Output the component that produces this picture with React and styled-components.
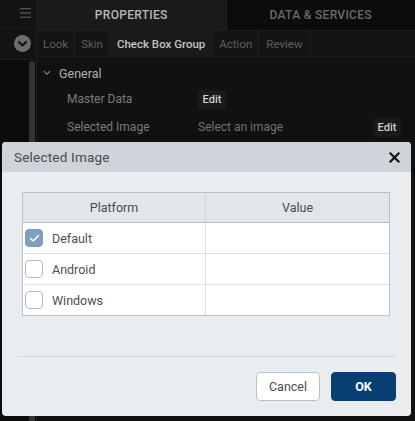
import React from "react";
import styled, { createGlobalStyle } from "styled-components";

const Global = createGlobalStyle`
  html, body { margin: 0; padding: 0; background: #0d0d0d; }
  body { font-family: Roboto, "Liberation Sans", sans-serif; }
  #root { width: 415px; height: 421px; overflow: hidden; }
`;

const Page = styled.div`
  position: relative;
  width: 415px;
  height: 421px;
  display: flex;
  background: #111111;
  overflow: hidden;
`;

const Sidebar = styled.div`
  width: 36px;
  flex: none;
  display: flex;
  flex-direction: column;
  border-right: 1px solid #1e1e1e;
  background: #0b0b0b;
`;

const SideCell = styled.div`
  height: ${(p) => p.h}px;
  display: flex;
  align-items: center;
  justify-content: flex-end;
  padding-right: ${(p) => p.pr}px;
  background: #131313;
  border-bottom: 1px solid #1e1e1e;
  box-sizing: border-box;
`;

const SideRest = styled.div`
  flex: 1;
  display: flex;
  justify-content: flex-end;
  padding-top: 1px;
`;

const ScrollBar = styled.div`
  width: 6px;
  height: 360px;
  margin-right: 1px;
  background: #333;
  border-radius: 3px 3px 0 0;
`;

const Main = styled.div`
  flex: 1;
  display: flex;
  flex-direction: column;
  min-width: 0;
`;

const TopTabs = styled.div`
  display: flex;
  height: 30px;
  border-bottom: 1px solid #1e1e1e;
`;

const TopTab = styled.div`
  flex: 1;
  display: flex;
  align-items: center;
  justify-content: center;
  font-size: 12px;
  font-weight: 500;
  letter-spacing: 0.3px;
  color: ${(p) => (p.active ? "#b8b8b8" : "#6a6a6a")};
  background: ${(p) => (p.active ? "#1a1a1a" : "#0c0c0c")};
  border-right: ${(p) => (p.active ? "1px solid #222" : "none")};
`;

const SubTabs = styled.div`
  display: flex;
  height: 25px;
  background: #141414;
  border-bottom: 1px solid #1a1a1a;
`;

const SubTab = styled.div`
  display: flex;
  align-items: center;
  padding: 0 ${(p) => p.px || 6}px;
  font-size: 11.5px;
  color: ${(p) => (p.active ? "#c4c4c4" : "#5e5e5e")};
  font-weight: ${(p) => (p.active ? 500 : 400)};
  background: ${(p) => (p.active ? "#1a1a1a" : "transparent")};
  border-right: 1px solid #1f1f1f;
`;

const Content = styled.div`
  flex: 1;
  padding: 7px 0 0 6px;
  display: flex;
  flex-direction: column;
`;

const SectionHead = styled.div`
  display: flex;
  align-items: center;
  gap: 8px;
  height: 18px;
  margin-bottom: 3px;
  font-size: 12.5px;
  color: #b0b0b0;
`;

const PropRow = styled.div`
  display: flex;
  align-items: center;
  height: 28px;
  padding-left: 24px;
  padding-right: 14px;
  font-size: 12px;
  color: #7a7a7a;
`;

const PropLabel = styled.div`
  width: 131px;
  flex: none;
`;

const PropValue = styled.div`
  flex: 1;
  color: #707070;
`;

const DarkEdit = styled.div`
  width: 28px;
  height: 19px;
  display: flex;
  align-items: center;
  justify-content: center;
  background: #1a1a1a;
  border-radius: 3px;
  color: #d0d0d0;
  font-size: 11px;
  font-weight: 500;
`;

const Modal = styled.div`
  position: absolute;
  left: 2px;
  top: 142px;
  width: 409px;
  height: 274px;
  background: #e9edf0;
  border-radius: 4px;
  display: flex;
  flex-direction: column;
  overflow: hidden;
`;

const ModalHeader = styled.div`
  height: 30px;
  flex: none;
  background: #cfd4da;
  display: flex;
  align-items: center;
  justify-content: space-between;
  padding: 0 11px 0 12px;
  font-size: 13.5px;
  color: #4a4a4a;
  letter-spacing: 0.2px;
`;

const ModalBody = styled.div`
  padding: 20px 21px 0 20px;
`;

const Table = styled.div`
  border: 1px solid #b9c0c7;
  background: #ffffff;
`;

const HeadRow = styled.div`
  display: grid;
  grid-template-columns: 183px 1fr;
  height: 29px;
  background: #e2e6ea;
  border-bottom: 1px solid #b9c0c7;
`;

const HeadCell = styled.div`
  display: flex;
  align-items: center;
  justify-content: center;
  font-size: 12.5px;
  color: #4a4a4a;
  border-right: ${(p) => (p.first ? "1px solid #d0d5da" : "none")};
`;

const Row = styled.div`
  display: grid;
  grid-template-columns: 183px 1fr;
  height: 30px;
  border-bottom: ${(p) => (p.last ? "none" : "1px solid #dadee2")};
`;

const Cell = styled.div`
  display: flex;
  align-items: center;
  gap: 9px;
  padding-left: 2px;
  font-size: 12.5px;
  color: #4f4f4f;
  border-right: ${(p) => (p.first ? "1px solid #dadee2" : "none")};
`;

const Box = styled.div`
  width: 18px;
  height: 18px;
  box-sizing: border-box;
  border-radius: 4px;
  border: 1px solid ${(p) => (p.checked ? "#7f9fbf" : "#b4bcc4")};
  background: ${(p) => (p.checked ? "#7f9fbf" : "#ffffff")};
  display: flex;
  align-items: center;
  justify-content: center;
`;

const Separator = styled.div`
  margin: 40px 15px 0 15px;
  height: 1px;
  background: #d3d8dc;
`;

const Footer = styled.div`
  display: flex;
  justify-content: flex-end;
  gap: 11px;
  padding: 15px 15px 0 0;
`;

const Button = styled.button`
  height: 29px;
  width: ${(p) => p.w}px;
  border-radius: 4px;
  font-family: Roboto, "Liberation Sans", sans-serif;
  font-size: 12.5px;
  cursor: pointer;
  border: 1px solid ${(p) => (p.primary ? "#073f75" : "#b9c0c7")};
  background: ${(p) => (p.primary ? "#073f75" : "#ffffff")};
  color: ${(p) => (p.primary ? "#ffffff" : "#4a4a4a")};
  font-weight: ${(p) => (p.primary ? 700 : 400)};
`;

const rows = [
  { name: "Default", checked: true },
  { name: "Android", checked: false },
  { name: "Windows", checked: false },
];

export default function App() {
  return (
    <>
      <Global />
      <Page>
        <Sidebar>
          <SideCell h={31} pr={5}>
            <svg width="11" height="10" viewBox="0 0 11 10">
              <rect x="0" y="0" width="11" height="1.3" fill="#555" />
              <rect x="0" y="4.3" width="11" height="1.3" fill="#555" />
              <rect x="0" y="8.6" width="11" height="1.3" fill="#555" />
            </svg>
          </SideCell>
          <SideCell h={36} pr={5}>
            <svg width="17" height="17" viewBox="0 0 17 17">
              <circle cx="8.5" cy="8.5" r="8.5" fill="#6d6d6d" />
              <path d="M5 7 L8.5 10.5 L12 7" stroke="#141414" strokeWidth="2.2" fill="none" strokeLinecap="round" strokeLinejoin="round" />
            </svg>
          </SideCell>
          <SideRest>
            <ScrollBar />
          </SideRest>
        </Sidebar>
        <Main>
          <TopTabs>
            <TopTab active>PROPERTIES</TopTab>
            <TopTab>DATA &amp; SERVICES</TopTab>
          </TopTabs>
          <SubTabs>
            <SubTab>Look</SubTab>
            <SubTab>Skin</SubTab>
            <SubTab active px={7}>Check Box Group</SubTab>
            <SubTab>Action</SubTab>
            <SubTab px={7}>Review</SubTab>
          </SubTabs>
          <Content>
            <SectionHead>
              <svg width="8" height="6" viewBox="0 0 8 6">
                <path d="M1 1.2 L4 4.2 L7 1.2" stroke="#888" strokeWidth="1.1" fill="none" />
              </svg>
              General
            </SectionHead>
            <PropRow>
              <PropLabel>Master Data</PropLabel>
              <DarkEdit>Edit</DarkEdit>
            </PropRow>
            <PropRow>
              <PropLabel>Selected Image</PropLabel>
              <PropValue>Select an image</PropValue>
              <DarkEdit>Edit</DarkEdit>
            </PropRow>
          </Content>
        </Main>

        <Modal>
          <ModalHeader>
            <span>Selected Image</span>
            <svg width="11" height="11" viewBox="0 0 11 11">
              <path d="M1.5 1.5 L9.5 9.5 M9.5 1.5 L1.5 9.5" stroke="#111" strokeWidth="2.2" strokeLinecap="square" />
            </svg>
          </ModalHeader>
          <ModalBody>
            <Table>
              <HeadRow>
                <HeadCell first>Platform</HeadCell>
                <HeadCell>Value</HeadCell>
              </HeadRow>
              {rows.map((r, i) => (
                <Row key={r.name} last={i === rows.length - 1}>
                  <Cell first>
                    <Box checked={r.checked}>
                      {r.checked && (
                        <svg width="11" height="9" viewBox="0 0 11 9">
                          <path d="M1.5 4.5 L4.2 7 L9.5 1.5" stroke="#fff" strokeWidth="1.6" fill="none" strokeLinecap="round" strokeLinejoin="round" />
                        </svg>
                      )}
                    </Box>
                    {r.name}
                  </Cell>
                  <Cell />
                </Row>
              ))}
            </Table>
          </ModalBody>
          <Separator />
          <Footer>
            <Button w={64}>Cancel</Button>
            <Button primary w={65}>OK</Button>
          </Footer>
        </Modal>
      </Page>
    </>
  );
}
